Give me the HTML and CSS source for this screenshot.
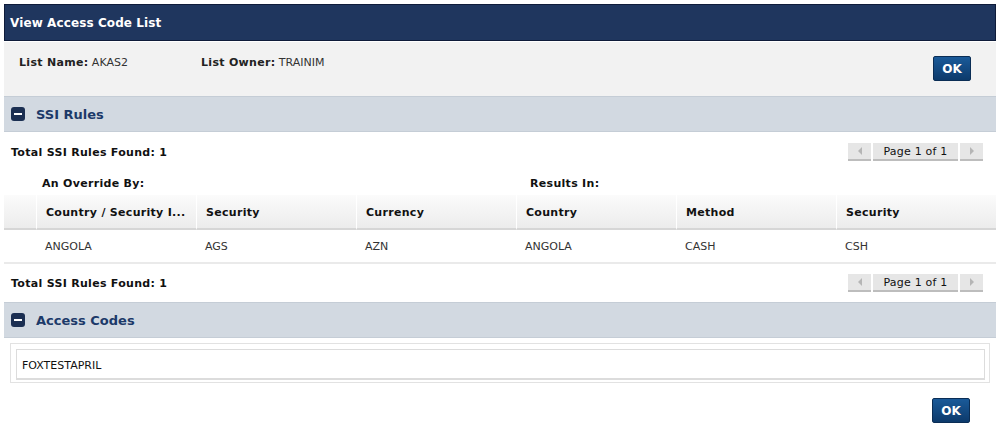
FILE: index.html
```html
<!DOCTYPE html>
<html>
<head>
<meta charset="utf-8">
<link rel="stylesheet" href="styles.css">
</head>
<body>
<div class="dialog">
  <div class="titlebar">View Access Code List</div>
  <div class="info">
    <div class="info-fields">
      <div class="field field-name"><b>List Name:</b> AKAS2</div>
      <div class="field"><b>List Owner:</b> TRAINIM</div>
    </div>
    <button class="ok">OK</button>
  </div>

  <div class="section-head"><span class="minus"></span>SSI Rules</div>
  <div class="summary">
    <div class="total">Total SSI Rules Found: 1</div>
    <div class="pager">
      <span class="pbtn"><span class="tri-l"></span></span>
      <span class="plabel">Page 1 of 1</span>
      <span class="pbtn"><span class="tri-r"></span></span>
    </div>
  </div>
  <div class="groups">
    <div class="group g1">An Override By:</div>
    <div class="group g2">Results In:</div>
  </div>
  <div class="grid">
    <div class="th th0"></div>
    <div class="th">Country / Security I...</div>
    <div class="th">Security</div>
    <div class="th">Currency</div>
    <div class="th">Country</div>
    <div class="th">Method</div>
    <div class="th">Security</div>
    <div class="td td0"></div>
    <div class="td">ANGOLA</div>
    <div class="td">AGS</div>
    <div class="td">AZN</div>
    <div class="td">ANGOLA</div>
    <div class="td">CASH</div>
    <div class="td">CSH</div>
  </div>
  <div class="summary summary2">
    <div class="total">Total SSI Rules Found: 1</div>
    <div class="pager">
      <span class="pbtn"><span class="tri-l"></span></span>
      <span class="plabel">Page 1 of 1</span>
      <span class="pbtn"><span class="tri-r"></span></span>
    </div>
  </div>

  <div class="section-head"><span class="minus"></span>Access Codes</div>
  <div class="codes-outer">
    <div class="codes-inner">FOXTESTAPRIL</div>
  </div>
  <div class="footer">
    <button class="ok">OK</button>
  </div>
</div>
</body>
</html>
```
FILE: styles.css
```css
* { box-sizing: border-box; }
html, body { margin: 0; padding: 0; background: #fff; }
body {
  padding: 4px;
  font-family: "DejaVu Sans", Verdana, sans-serif;
  font-size: 11px;
  color: #222;
}
b, .total, .th, .groups { letter-spacing: 0.3px; }
.dialog { width: 992px; }
.titlebar {
  height: 37px;
  background: #1f365e;
  border: 1px solid #0f1c3a;
  color: #fff;
  font-weight: bold;
  font-size: 12px;
  letter-spacing: 0.1px;
  padding: 0 5px;
  display: flex;
  align-items: center;
}
.info {
  margin-top: 1px;
  height: 54px;
  background: #f2f2f2;
  display: flex;
  justify-content: space-between;
  padding: 0 25px 0 15px;
}
.info-fields { display: flex; padding-top: 14px; }
.field { color: #333; }
.field b { color: #222; }
.field-name { width: 182px; }
.ok {
  font-family: inherit;
  font-weight: bold;
  font-size: 12px;
  color: #fff;
  width: 38px;
  height: 25px;
  border: 1px solid #0a2d55;
  border-radius: 2px;
  background: linear-gradient(#1a5a99, #0d3a6b);
  padding: 0;
  margin-top: 14px;
}
.section-head {
  height: 36px;
  background: #d2d9e1;
  border-top: 1px solid #c5cdd6;
  border-bottom: 1px solid #c5cdd6;
  display: flex;
  align-items: center;
  padding-left: 7px;
  color: #1c3a69;
  font-weight: bold;
  font-size: 13px;
}
.minus {
  width: 14px;
  height: 14px;
  background: #1b2f52;
  border-radius: 3px;
  margin-right: 11px;
  position: relative;
  display: inline-block;
}
.minus::after {
  content: "";
  position: absolute;
  left: 3px;
  right: 3px;
  top: 6px;
  height: 2px;
  background: #fff;
}
.summary {
  display: flex;
  justify-content: space-between;
  align-items: center;
  height: 40px;
  padding: 0 13px 0 7px;
}
.summary2 { height: 38px; }
.total { font-weight: bold; color: #111; }
.pager { display: flex; gap: 2px; height: 18px; }
.pbtn, .plabel {
  background: #e6e6e6;
  border-bottom: 2px solid #bdbdbd;
  display: flex;
  align-items: center;
  justify-content: center;
}
.pbtn { width: 23px; }
.plabel { width: 85px; color: #111; font-size: 11px; letter-spacing: 0.2px; }
.tri-l, .tri-r { width: 0; height: 0; border-top: 4px solid transparent; border-bottom: 4px solid transparent; }
.tri-l { border-right: 4px solid #b5b5b5; }
.tri-r { border-left: 4px solid #b5b5b5; }
.groups { display: flex; height: 23px; align-items: center; font-weight: bold; color: #111; }
.g1 { margin-left: 38px; width: 488px; }
.grid {
  display: grid;
  grid-template-columns: 32px repeat(6, 160px);
}
.th {
  height: 35px;
  background: linear-gradient(#fbfbfb, #ececec);
  border-bottom: 2px solid #d6d6d6;
  border-left: 1px solid #fff;
  font-weight: bold;
  color: #111;
  display: flex;
  align-items: center;
  padding-left: 9px;
  padding-top: 2px;
  white-space: nowrap;
}
.th0 { border-left: none; }
.td {
  height: 34px;
  border-bottom: 2px solid #eaeaea;
  display: flex;
  align-items: center;
  padding-left: 9px;
  color: #333;
}
.codes-outer {
  margin: 5px 6px 0 6px;
  border: 1px solid #e2e2e2;
  padding: 5px 4px 2px 5px;
  height: 40px;
}
.codes-inner {
  height: 31px;
  border: 1px solid #dcdcdc;
  border-bottom-width: 2px;
  display: flex;
  align-items: center;
  padding-left: 5px;
  padding-top: 2px;
  color: #111;
}
.footer { display: flex; justify-content: flex-end; padding-right: 26px; }
.footer .ok { margin-top: 15px; }
```
